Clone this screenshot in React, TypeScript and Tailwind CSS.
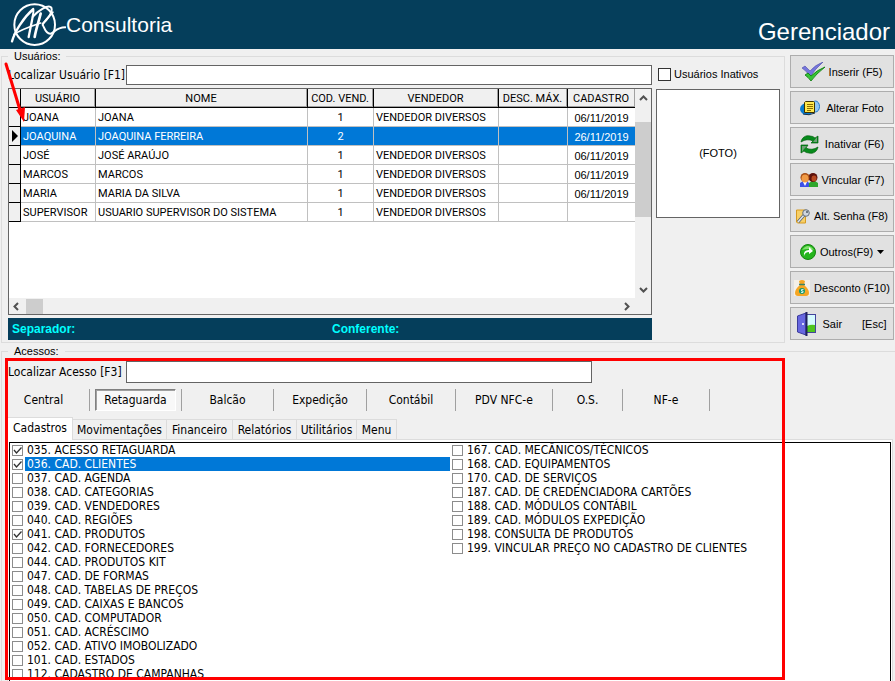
import type { ReactNode } from "react";

type User = { user: string; name: string; code: string; seller: string; date: string; selected?: boolean };

const users: User[] = [
  { user: "JOANA", name: "JOANA", code: "1", seller: "VENDEDOR DIVERSOS", date: "06/11/2019" },
  { user: "JOAQUINA", name: "JOAQUINA FERREIRA", code: "2", seller: "", date: "26/11/2019", selected: true },
  { user: "JOSÉ", name: "JOSÉ ARAÚJO", code: "1", seller: "VENDEDOR DIVERSOS", date: "06/11/2019" },
  { user: "MARCOS", name: "MARCOS", code: "1", seller: "VENDEDOR DIVERSOS", date: "06/11/2019" },
  { user: "MARIA", name: "MARIA DA SILVA", code: "1", seller: "VENDEDOR DIVERSOS", date: "06/11/2019" },
  { user: "SUPERVISOR", name: "USUARIO SUPERVISOR DO SISTEMA", code: "1", seller: "VENDEDOR DIVERSOS", date: "" },
];

const headers = [
  { label: "USUÁRIO", width: "w-[75px]" },
  { label: "NOME", width: "" },
  { label: "COD. VEND.", width: "w-[66px]" },
  { label: "VENDEDOR", width: "w-[125px]" },
  { label: "DESC. MÁX.", width: "w-[69px]" },
  { label: "CADASTRO", width: "w-[67px]" },
];

const modules = [
  { label: "Central", width: "w-[81px]" },
  { label: "Retaguarda", width: "w-[81px]", pressed: true },
  { label: "Balcão", width: "w-[81px]" },
  { label: "Expedição", width: "w-[82px]" },
  { label: "Contábil", width: "w-[78px]" },
  { label: "PDV NFC-e", width: "w-[86px]" },
  { label: "O.S.", width: "w-[59px]" },
  { label: "NF-e", width: "w-[76px]" },
];

const tabs = [
  { label: "Movimentações", width: "w-[94px]" },
  { label: "Financeiro", width: "w-[66px]" },
  { label: "Relatórios", width: "w-[64px]" },
  { label: "Utilitários", width: "w-[60px]" },
  { label: "Menu", width: "w-[40px]" },
];

const leftItems = [
  "035. ACESSO RETAGUARDA",
  "036. CAD. CLIENTES",
  "037. CAD. AGENDA",
  "038. CAD. CATEGORIAS",
  "039. CAD. VENDEDORES",
  "040. CAD. REGIÕES",
  "041. CAD. PRODUTOS",
  "042. CAD. FORNECEDORES",
  "044. CAD. PRODUTOS KIT",
  "047. CAD. DE FORMAS",
  "048. CAD. TABELAS DE PREÇOS",
  "049. CAD. CAIXAS E BANCOS",
  "050. CAD. COMPUTADOR",
  "051. CAD. ACRÉSCIMO",
  "052. CAD. ATIVO IMOBOLIZADO",
  "101. CAD. ESTADOS",
  "112. CADASTRO DE CAMPANHAS",
];

const rightItems = [
  "167. CAD. MECÂNICOS/TÉCNICOS",
  "168. CAD. EQUIPAMENTOS",
  "170. CAD. DE SERVIÇOS",
  "187. CAD. DE CREDENCIADORA CARTÕES",
  "188. CAD. MÓDULOS CONTÁBIL",
  "189. CAD. MÓDULOS EXPEDIÇÃO",
  "198. CONSULTA DE PRODUTOS",
  "199. VINCULAR PREÇO NO CADASTRO DE CLIENTES",
];

const checkedItems = ["035", "036", "041"];

function Logo() {
  return (
    <svg width="56" height="48" viewBox="0 0 168 144" fill="none" stroke="#fff" strokeLinecap="round" strokeLinejoin="round" aria-hidden="true">
      <circle cx="74" cy="71" r="61" strokeWidth="6" />
      <path d="M6 121C14 92 40 50 70 24C74 26 62 76 56 108" strokeWidth="7" />
      <path d="M12 100C36 84 62 76 92 66" strokeWidth="5" />
      <path d="M92 38C86 62 78 84 74 108" strokeWidth="8" />
      <path d="M68 48C82 30 116 8 124 20C130 34 110 58 98 68" strokeWidth="6" />
      <path d="M128 34C112 52 98 66 98 72C104 80 106 100 122 98C134 94 138 80 166 79" strokeWidth="6" />
    </svg>
  );
}

function ChecksIcon() {
  return (
    <svg width="23" height="20" viewBox="0 0 23 20" aria-hidden="true">
      <path d="M0 6L3 4L8 9Q13 3 21 0Q13 7 8 15Q5 9 0 6Z" fill="#7676dd" stroke="#4848a8" strokeWidth=".6" />
      <path d="M3 13L6 11L9 14Q15 8 23 5Q14 12 9 19Q6 15 3 13Z" fill="#35c435" stroke="#087808" strokeWidth=".8" />
    </svg>
  );
}

function PhotoIcon() {
  return (
    <svg width="20" height="16" viewBox="0 0 20 16" aria-hidden="true">
      <ellipse cx="7" cy="9" rx="7" ry="6" fill="#087bd0" />
      <ellipse cx="15.500" cy="6.500" rx="4" ry="5.500" fill="#8fc6f5" stroke="#247ac4" />
      <path d="M5.500 1.500H13.500L14.500 2.500V12.500H4.500V2.500Z" fill="#ffe84c" stroke="#3d3200" />
      <path d="M7 4.500H13M7 6.500H13M7 8.500H13M7 10.500H11" stroke="#8a6d00" />
      <path d="M3 14Q9 16 15 13" stroke="#18324c" fill="none" />
    </svg>
  );
}

function RefreshIcon() {
  return (
    <svg width="19" height="19" viewBox="0 0 19 19" aria-hidden="true">
      <path d="M1 7C2 2 6 0 10 1Q13 1 15 3L18 1V8H11L13 6Q7 3 1 7Z" fill="#078b1c" stroke="#04600f" strokeWidth=".7" />
      <path d="M18 12C17 17 13 19 9 18Q6 18 4 16L1 18V10H8L6 13Q12 16 18 12Z" fill="#078b1c" stroke="#04600f" strokeWidth=".7" />
      <path d="M2 17V11H7L4 14ZM17 2V7H13Z" fill="#72a078" />
    </svg>
  );
}

function PeopleIcon() {
  return (
    <svg width="18" height="14" viewBox="0 0 18 14" aria-hidden="true">
      <path d="M9 14V10L12 8H15L18 10V14Z" fill="#2fa72c" />
      <circle cx="13" cy="4.500" r="4.500" fill="#5e120c" />
      <ellipse cx="14" cy="5.500" rx="2.500" ry="3" fill="#b84a22" />
      <path d="M0 14V10L3 8H7L9 10V14Z" fill="#3c50e8" />
      <path d="M3 9L5 13L7 9Z" fill="#fff" />
      <circle cx="5" cy="4.500" r="4.500" fill="#a64c13" />
      <ellipse cx="5" cy="5.500" rx="3.500" ry="4" fill="#f09a45" />
    </svg>
  );
}

function KeyIcon() {
  return (
    <svg width="14" height="15" viewBox="0 0 14 15" aria-hidden="true">
      <path d="M0.500 1H9.500V14H1.500L0.500 13Z" fill="#f7cf67" stroke="#d69a20" />
      <path d="M2 13L9 5" stroke="#55606c" strokeWidth="3" />
      <path d="M2 13L9 5" stroke="#e1e7ed" strokeWidth="1.500" />
      <circle cx="10" cy="4" r="3.300" fill="#cfd6df" stroke="#66717d" />
      <circle cx="11" cy="3" r="1" fill="#4e5965" />
    </svg>
  );
}

function GreenArrowIcon() {
  return (
    <svg width="16" height="16" viewBox="0 0 16 16" aria-hidden="true">
      <circle cx="8" cy="8" r="7.500" fill="#25b51d" stroke="#168510" />
      <path d="M2 6Q8 -2 14 6Q8 4 2 6Z" fill="#83e26f" />
      <path d="M4 12Q3 6 9 6V3L13 7L9 10V8Q5 8 4 12Z" fill="#fff" />
    </svg>
  );
}

function MoneyIcon() {
  return (
    <svg width="16" height="16" viewBox="0 0 16 16" aria-hidden="true">
      <rect width="16" height="16" fill="#f4f0e8" />
      <path d="M5 1Q8 -1 11 1L10 5Q15 9 15 13Q15 16 12 16H4Q1 16 1 13Q1 9 6 5Z" fill="#f5a623" />
      <path d="M5 4.500H11" stroke="#398466" strokeWidth="1.500" />
      <circle cx="8" cy="11" r="3" fill="#159b72" />
      <path d="M9.500 9.500H7.500V11H9V12.500H7" fill="none" stroke="#fff" strokeWidth=".8" />
    </svg>
  );
}

function DoorIcon() {
  return (
    <svg width="19" height="24" viewBox="0 0 19 24" aria-hidden="true">
      <rect x="8.500" y="2.500" width="10" height="18" fill="#d6fbff" stroke="#44449c" />
      <path d="M10 14Q14 12 18 13V20H10Z" fill="#4fc51d" />
      <path d="M0.500 4L9 1V23L0.500 20Z" fill="#6767e0" stroke="#3b3b9b" />
      <path d="M9.500 0V24" stroke="#20205f" strokeWidth="2" />
      <circle cx="6" cy="12" r="1" fill="#fff" />
    </svg>
  );
}

function ActionButton({ icon, children, gap = "gap-1" }: { icon: ReactNode; children: ReactNode; gap?: string }) {
  return (
    <button type="button" className={`flex h-[33px] w-full items-center justify-center border border-[#adadad] bg-[#e1e1e1] pt-px text-[11px] whitespace-nowrap ${gap}`}>
      {icon}
      {children}
    </button>
  );
}

function Chevron({ d }: { d: string }) {
  return (
    <svg width="9" height="9" viewBox="0 0 9 9" fill="none" stroke="#505050" strokeWidth="2" aria-hidden="true">
      <path d={d} />
    </svg>
  );
}

function AccessItem({ text }: { text: string }) {
  const selected = text.startsWith("036");
  return (
    <li>
      <label className="flex h-[14px] items-center gap-[2px] pl-[2px]">
        <input
          type="checkbox"
          defaultChecked={checkedItems.includes(text.slice(0, 3))}
          className="peer h-[11px] w-[11px] shrink-0 appearance-none border border-[#8c8c8c] bg-white"
        />
        <svg viewBox="0 0 11 11" className="pointer-events-none -ml-[13px] hidden h-[11px] w-[11px] shrink-0 peer-checked:block" fill="none" stroke="#333" strokeWidth="1.300" aria-hidden="true">
          <path d="M2 5L4.500 8L9.500 2.500" />
        </svg>
        <span className={`h-[14px] flex-1 pl-[2px] leading-[14px] whitespace-nowrap ${selected ? "bg-[#0078d7] text-white" : ""}`}>{text}</span>
      </label>
    </li>
  );
}

export default function App() {
  return (
    <div className="flex h-screen flex-col overflow-hidden bg-[#f0f0f0] font-['Liberation_Sans',Arial,sans-serif] text-[11px] text-black">
      <header className="flex h-[49px] shrink-0 items-center justify-between bg-[#053e5b] pr-[5px] pl-[10px] text-white">
        <div className="flex items-center">
          <Logo />
          <span className="text-[21px] leading-6">Consultoria</span>
        </div>
        <h1 className="pt-[14px] text-[24px] leading-7">Gerenciador</h1>
      </header>

      <div className="flex shrink-0 gap-[5px] pt-[6px] pr-px pl-px">
        <section className="relative mt-px flex-1 border border-[#dcdcdc] px-[6px] pt-[8px] pr-[4px] pb-[2px]">
          <h2 className="absolute -top-[8px] left-[6px] bg-[#f0f0f0] px-[6px] leading-[14px]">Usuários:</h2>
          <div className="flex gap-[4px]">
            <div className="min-w-0 flex-1">
              <div className="flex h-[20px] items-center">
                <label htmlFor="find-user" className="w-[118px] shrink-0 font-['DejaVu_Sans_Condensed','DejaVu_Sans',sans-serif] text-[12px] leading-[18px] whitespace-nowrap">
                  Localizar Usuário [F1]
                </label>
                <input id="find-user" className="h-[20px] min-w-0 flex-1 border border-[#646464] bg-white px-1 outline-none" />
              </div>

              <div className="mt-[3px] flex h-[227px] flex-col border border-[#646464] bg-white">
                <div className="flex min-h-0 flex-1">
                  <div className="min-w-0 flex-1">
                    <table className="w-full table-fixed border-separate border-spacing-0 font-[Roboto,sans-serif]">
                      <thead>
                        <tr className="h-[19px]">
                          <th className="w-[12px] border-r border-b border-black bg-[#f0f0f0] p-0" />
                          {headers.map((h) => (
                            <th
                              key={h.label}
                              className={`border-r border-b border-black bg-[#f0f0f0] p-0 text-center leading-[15px] font-normal whitespace-nowrap last:border-r-0 ${h.width}`}
                            >
                              <div className="h-[18px] border-r border-b border-[#a0a0a0] pt-[2px]">{h.label}</div>
                            </th>
                          ))}
                        </tr>
                      </thead>
                      <tbody>
                        {users.map((u) => (
                          <tr
                            key={u.user}
                            className={`h-[19px] leading-[16px] whitespace-nowrap [&>td]:border-r [&>td]:border-b [&>td]:border-[#c0c0c0] [&>td]:px-[2px] [&>td]:pt-[2px] [&>td]:pb-0 [&>td:last-child]:border-r-0 ${u.selected ? "bg-[#0078d7] text-white" : ""}`}
                          >
                            <th className="border-r border-b border-black bg-[#f0f0f0] p-0">
                              {u.selected && (
                                <svg width="7" height="12" viewBox="0 0 7 12" className="ml-[3px]" aria-hidden="true">
                                  <path d="M0 0L6 6L0 12Z" />
                                </svg>
                              )}
                            </th>
                            <td>{u.user}</td>
                            <td>{u.name}</td>
                            <td className="text-center">{u.code}</td>
                            <td>{u.seller}</td>
                            <td />
                            <td className="text-center font-['Liberation_Sans',Arial,sans-serif]">{u.date}</td>
                          </tr>
                        ))}
                      </tbody>
                    </table>
                  </div>
                  <div className="flex w-[16px] shrink-0 flex-col items-center justify-between bg-[#f0f0f0] pt-[5px] pb-[4px]">
                    <Chevron d="M1 6L4.500 2.500L8 6" />
                    <div className="mt-[19px] mb-auto h-[95px] w-[16px] bg-[#cdcdcd]" />
                    <Chevron d="M1 3L4.500 6.500L8 3" />
                  </div>
                </div>
                <div className="flex h-[16px] shrink-0 items-center bg-[#f0f0f0] pr-[20px] pl-[3px]">
                  <Chevron d="M6 1L2.500 4.500L6 8" />
                  <div className="mr-auto ml-[5px] h-[15px] w-[17px] bg-[#cdcdcd]" />
                  <Chevron d="M3 1L6.500 4.500L3 8" />
                </div>
              </div>
            </div>

            <div className="w-[124px] shrink-0">
              <label className="flex h-[18px] items-center gap-[3px] pl-[2px] whitespace-nowrap">
                <input type="checkbox" className="h-[13px] w-[13px] appearance-none border border-[#333] bg-white" />
                Usuários Inativos
              </label>
              <div className="mt-[6px] flex h-[129px] items-center justify-center border border-[#646464] bg-white">(FOTO)</div>
            </div>
          </div>
          <div className="mt-[3px] mr-[128px] flex h-[22px] items-center bg-[#053e5b] pl-[4px] text-[12px] font-bold text-[#00ffff]">
            <span className="flex-1">Separador:</span>
            <span className="flex-1">Conferente:</span>
          </div>
        </section>

        <nav className="flex w-[104px] shrink-0 flex-col gap-[3px]">
          <ActionButton icon={<ChecksIcon />}>Inserir (F5)</ActionButton>
          <ActionButton icon={<PhotoIcon />} gap="gap-[6px]">Alterar Foto</ActionButton>
          <ActionButton icon={<RefreshIcon />} gap="gap-[6px]">Inativar (F6)</ActionButton>
          <ActionButton icon={<PeopleIcon />}>Vincular (F7)</ActionButton>
          <ActionButton icon={<KeyIcon />}>Alt. Senha (F8)</ActionButton>
          <ActionButton icon={<GreenArrowIcon />}>
            Outros(F9)
            <svg width="7" height="4" viewBox="0 0 7 4" aria-hidden="true">
              <path d="M0 0H7L3.500 4Z" />
            </svg>
          </ActionButton>
          <ActionButton icon={<MoneyIcon />}>Desconto (F10)</ActionButton>
          <ActionButton icon={<DoorIcon />} gap="gap-[6px]">
            <span>Sair</span>
            <span className="ml-[14px]">[Esc]</span>
          </ActionButton>
        </nav>
      </div>

      <section className="relative mt-[8px] ml-px flex min-h-0 flex-1 flex-col border-t border-l border-[#dcdcdc] font-['DejaVu_Sans_Condensed','DejaVu_Sans',sans-serif] text-[12px]">
        <h2 className="absolute -top-[8px] left-[6px] bg-[#f0f0f0] px-[6px] font-['Liberation_Sans',Arial,sans-serif] text-[11px] leading-[14px]">Acessos:</h2>
        <div className="mt-[9px] flex h-[22px] shrink-0 items-center pl-[6px]">
          <label htmlFor="find-access" className="w-[118px] shrink-0 whitespace-nowrap">Localizar Acesso [F3]</label>
          <input id="find-access" className="h-[22px] w-[466px] border border-[#646464] bg-white px-1 outline-none" />
        </div>

        <div className="mt-[6px] flex h-[22px] shrink-0 pl-px">
          {modules.map((m) => (
            <div key={m.label} className="mr-[5px] flex border-r border-[#a0a0a0] pr-[5px]">
              <button
                type="button"
                aria-pressed={!!m.pressed}
                className={`h-[22px] leading-[20px] whitespace-nowrap ${m.width} ${m.pressed ? "border border-t-[#808080] border-r-white border-b-white border-l-[#808080] bg-[#f8f8f8] shadow-[inset_1px_1px_0_#a0a0a0]" : ""}`}
              >
                {m.label}
              </button>
            </div>
          ))}
        </div>

        <div className="mt-[6px] flex h-[22px] shrink-0 items-end pl-[5px]" role="tablist">
          <button type="button" role="tab" aria-selected="true" className="relative z-10 -mb-px h-[23px] w-[66px] border border-b-0 border-[#dcdcdc] bg-white pb-[3px] whitespace-nowrap">
            Cadastros
          </button>
          {tabs.map((t) => (
            <button key={t.label} type="button" role="tab" aria-selected="false" className={`h-[20px] border border-b-0 border-l-0 border-[#dcdcdc] whitespace-nowrap ${t.width}`}>
              {t.label}
            </button>
          ))}
        </div>
        <div className="mr-[2px] ml-[5px] flex min-h-0 flex-1 border border-b-0 border-[#dcdcdc] bg-white pt-[2px] pr-px pl-px">
          <div className="flex min-h-0 min-w-0 flex-1 overflow-hidden border border-b-0 border-black">
            <ul className="w-1/2">
              {leftItems.map((t) => (
                <AccessItem key={t} text={t} />
              ))}
            </ul>
            <ul className="w-1/2">
              {rightItems.map((t) => (
                <AccessItem key={t} text={t} />
              ))}
            </ul>
          </div>
        </div>
        <div className="pointer-events-none absolute top-[6px] right-[110px] bottom-px left-[3px] z-20 border-3 border-[#ff0000]" />
      </section>

      <svg className="pointer-events-none absolute top-[62px] left-[4px]" width="24" height="62" viewBox="0 0 24 62" aria-hidden="true">
        <path d="M2 2L16 48" stroke="#f00" strokeWidth="3" strokeLinecap="round" />
        <path d="M12 48L21 45L20 60Z" fill="#f00" />
      </svg>
    </div>
  );
}
